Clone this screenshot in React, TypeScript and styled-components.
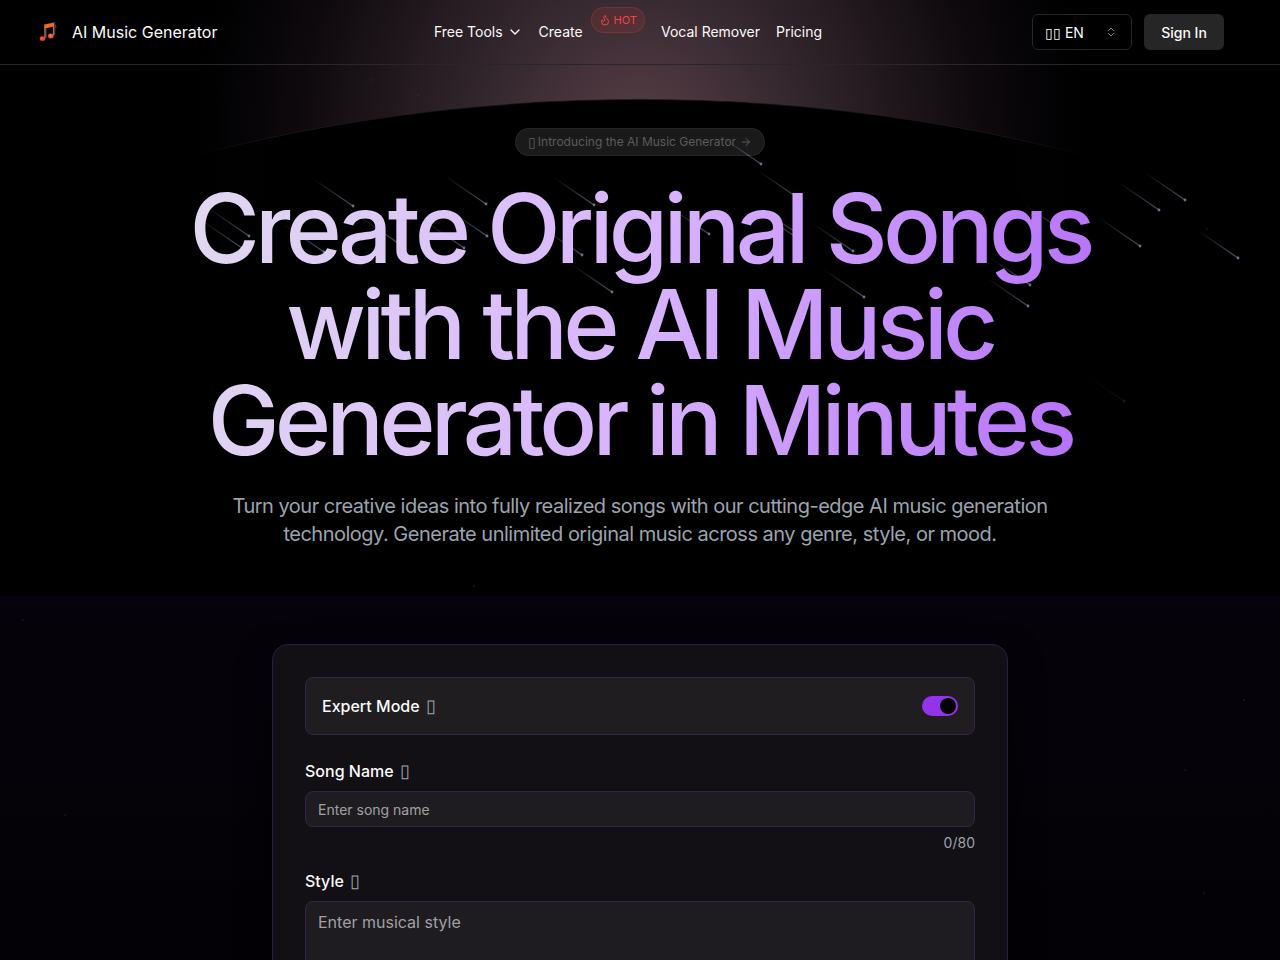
import React, { useState } from "react";
import styled, { createGlobalStyle } from "styled-components";
import { ArrowRight, ChevronDown, ChevronsUpDown, Flame } from "lucide-react";

const GlobalStyle = createGlobalStyle`
  *, *::before, *::after { box-sizing: border-box; }
  html { color-scheme: dark; background: #000; }
  body {
    margin: 0;
    background: #000;
    color: #fafafa;
    font-family: Inter, sans-serif;
    font-size: 16px;
    line-height: 24px;
    overflow-x: hidden;
  }
  button, input, textarea, select { font-family: inherit; }
  a { color: inherit; text-decoration: none; }
`;

const Page = styled.div`
  position: relative;
  min-height: 100vh;
  overflow: hidden;
`;

const Sky = styled.div`
  position: absolute;
  inset: 0 0 auto;
  height: 600px;
  overflow: hidden;
  pointer-events: none;
`;

const Glow = styled.div`
  position: absolute;
  inset: 0;
  background: radial-gradient(
    circle 450px at 50% 130px,
    #573d46 0%, #35282f 33%, #291e24 47%, #1c1419 60%, #0e090d 76%, #040305 90%, #000 100%
  );
`;

const Planet = styled.div`
  position: absolute;
  top: 99px;
  left: -50%;
  width: 200%;
  aspect-ratio: 10 / 7;
  border-radius: 50%;
  border-top: 1px solid #ffffff18;
  background: #000;
  mask-image: linear-gradient(90deg, transparent 32%, #000 36%, #000 64%, transparent 68%);
`;

const Meteors = styled.svg`
  position: absolute;
  top: 0;
  left: 50%;
  width: 1280px;
  height: 960px;
  margin-left: -640px;
  pointer-events: none;
`;

const Header = styled.header`
  position: relative;
  z-index: 2;
  display: grid;
  grid-template-columns: 1fr auto 1fr;
  align-items: center;
  height: 65px;
  padding: 0 56px 0 32px;
  border-bottom: 1px solid #27272a;
`;

const Brand = styled.a`
  display: flex;
  align-items: center;
  gap: 8px;
`;

const Nav = styled.nav`
  display: flex;
  align-items: center;
  gap: 16px;
  font-size: 14px;
  line-height: 20px;
`;

const MenuButton = styled.button`
  display: flex;
  align-items: center;
  gap: 4px;
  padding: 0;
  border: 0;
  background: none;
  color: inherit;
  font-size: 14px;
  line-height: 20px;
`;

const NavLink = styled.a`
  display: flex;
  align-items: center;
  gap: 8px;
`;

const HotBadge = styled.span`
  display: flex;
  align-items: center;
  gap: 3px;
  height: 26px;
  margin-bottom: 24px;
  padding: 0 7px;
  border: 1px solid #ef444433;
  border-radius: 13px;
  background: #ef44441f;
  color: #ef4444;
  font-size: 11px;
  line-height: 16px;
`;

const Actions = styled.div`
  display: flex;
  justify-content: flex-end;
  gap: 12px;
`;

const LanguageBox = styled.div`
  position: relative;
  display: flex;
  align-items: center;
  width: 100px;
  svg { position: absolute; right: 15px; color: #808080; pointer-events: none; }
`;

const LanguageSelect = styled.select`
  appearance: none;
  width: 100%;
  height: 36px;
  padding: 0 12px;
  border: 1px solid #27272a;
  border-radius: 6px;
  background: #000;
  color: #fafafa;
  font-size: 14px;
`;

const SignIn = styled.button`
  min-width: 80px;
  height: 36px;
  padding: 0 16px;
  border: 0;
  border-radius: 6px;
  background: #262626;
  color: #fafafa;
  font-size: 14px;
  font-weight: 500;
`;

const Hero = styled.section`
  position: relative;
  display: flex;
  flex-direction: column;
  align-items: center;
  padding: 63px 32px 48px;
  text-align: center;
`;

const Announcement = styled.a`
  display: flex;
  align-items: center;
  gap: 2px;
  height: 28px;
  padding: 0 12px;
  border: 1px solid #ffffff0e;
  border-radius: 14px;
  background: #ffffff1a;
  color: #5c5c5c;
  font-size: 12px;
  line-height: 16px;
  svg { margin-left: 2px; }
`;

const AnnouncementMark = styled.span`
  font-size: 14px;
`;

const Title = styled.h1`
  max-width: 1088px;
  margin: 24px 0 0;
  padding: 0 0 8px;
  background: linear-gradient(100deg, #e5e7eb -8%, #d8b4fe 50%, #a855f7 108%);
  background-clip: text;
  color: transparent;
  font-size: 96px;
  font-weight: 500;
  line-height: 96px;
  letter-spacing: -0.05em;
`;

const Lead = styled.p`
  max-width: 896px;
  margin: 16px 0 0;
  color: #9ca3af;
  font-size: 20px;
  line-height: 28px;
  letter-spacing: -0.025em;
`;

const Studio = styled.section`
  position: relative;
  display: flex;
  justify-content: center;
  padding: 48px 32px;
  background: linear-gradient(#7828c80e, #7828c806 400px, #7828c800);
`;

const Card = styled.form`
  width: 100%;
  max-width: 736px;
  padding: 32px;
  border: 1px solid #2e1a42;
  border-radius: 16px;
  background: #131015;
  box-shadow: 0 12px 32px #00000080;
`;

const ModeRow = styled.div`
  display: flex;
  align-items: center;
  justify-content: space-between;
  height: 58px;
  margin-bottom: 24px;
  padding: 0 16px;
  border: 1px solid #36234a;
  border-radius: 8px;
  background: #201d21;
`;

const Label = styled.label`
  display: flex;
  gap: 6px;
  font-weight: 500;
`;

const Hint = styled.span`
  color: #9ca3af;
  font-size: 18px;
  font-weight: 400;
`;

const Toggle = styled.input`
  appearance: none;
  width: 36px;
  height: 20px;
  margin: 0;
  padding: 2px;
  border-radius: 10px;
  background: #3f3f46;
  &::before {
    content: "";
    display: block;
    width: 16px;
    height: 16px;
    border-radius: 50%;
    background: #000;
  }
  &:checked { background: #9333ea; }
  &:checked::before { margin-left: 16px; }
`;

const Field = styled.div`
  display: flex;
  flex-direction: column;
  margin-bottom: 16px;
`;

const TextInput = styled.input`
  width: 100%;
  height: 36px;
  margin-top: 8px;
  padding: 0 12px;
  border: 1px solid #36234a;
  border-radius: 8px;
  outline: none;
  background: #1f1c21;
  color: #fafafa;
  font-size: 14px;
  &::placeholder { color: #a1a1a1; }
`;

const TextArea = styled.textarea`
  display: block;
  width: 100%;
  height: 68px;
  margin-top: 8px;
  padding: 8px 12px;
  border: 1px solid #36234a;
  border-radius: 8px;
  outline: none;
  background: #1f1c21;
  color: #fafafa;
  font-size: 16px;
  line-height: 24px;
  &::placeholder { color: #a1a1a1; }
`;

const Counter = styled.div`
  margin-top: 6px;
  color: #9ca3af;
  font-size: 14px;
  line-height: 20px;
  text-align: right;
`;

const meteors: [number, number, number][] = [
  [353, 206, 1], [249, 236, 1], [242, 248, 1], [487, 236, 1], [486, 204, 1],
  [594, 205, 1], [464, 248, 1], [582, 255, 1], [612, 292, 1], [324, 252, 1],
  [398, 243, 1], [761, 164, 1], [798, 198, 1], [709, 234, 1], [798, 234, 1],
  [800, 240, 1], [853, 251, 1], [864, 297, 1], [1028, 306, 1], [1030, 285, 1],
  [1066, 233, 1], [1159, 210, 1], [1185, 200, 1], [1140, 246, 1], [1238, 258, 1],
  [1124, 401, 0.2],
];

const specks: [number, number][] = [
  [371, 80], [418, 95], [617, 91], [1207, 229], [474, 586], [23, 620], [65, 815], [1185, 770], [1244, 700], [1204, 893],
];

const MusicLogo = () => (
  <svg width="32" height="32" viewBox="0 0 32 32" aria-hidden="true">
    <path d="M13.5 21.5V9.500l8.500-2v11.500" fill="none" stroke="#1c2c4a" strokeWidth="3" />
    <path d="M13 22V9.500M21.700 8v11.500" fill="none" stroke="#e0602f" strokeWidth="1.200" />
    <path d="M12.500 8.500l9.500-1.800v3.800l-9.500 2z" fill="#f26a26" />
    <path d="M22 8q2 1 2 4" fill="none" stroke="#6f3b35" />
    <ellipse cx="10.500" cy="22.500" rx="2.800" ry="2.300" fill="#d94d32" />
    <ellipse cx="18.800" cy="20" rx="2.800" ry="2.500" fill="#e35636" />
    <circle cx="18.500" cy="19.500" r="1" fill="#ff8877" />
    <circle cx="10" cy="22" r="0.800" fill="#ff755b" />
  </svg>
);

export default function App() {
  const [expert, setExpert] = useState(true);
  const [name, setName] = useState("");
  return (
    <Page>
      <GlobalStyle />
      <Sky><Glow /><Planet /></Sky>
      <Meteors viewBox="0 0 1280 960" aria-hidden="true">
        <defs>
          <linearGradient id="tail" x1="0" y1="0" x2="1" y2="1">
            <stop offset="0" stopColor="#64748b" stopOpacity="0" />
            <stop offset="1" stopColor="#64748b" stopOpacity="0.7" />
          </linearGradient>
        </defs>
        {meteors.map(([x, y, o]) => (
          <g key={`${x}-${y}`} opacity={o}>
            <path d={`M${x - 41} ${y - 28}L${x} ${y}`} stroke="url(#tail)" strokeWidth="1.300" />
            <circle cx={x} cy={y} r="1.400" fill="#64748b" />
          </g>
        ))}
        {specks.map(([x, y]) => (
          <circle key={`${x}-${y}`} cx={x} cy={y} r="1" fill="#7a3b66" opacity="0.25" />
        ))}
      </Meteors>
      <Header>
        <Brand href="#"><MusicLogo />AI Music Generator</Brand>
        <Nav>
          <MenuButton type="button">Free Tools<ChevronDown size={16} /></MenuButton>
          <NavLink href="#create">Create<HotBadge><Flame size={12} />HOT</HotBadge></NavLink>
          <NavLink href="#vocal">Vocal Remover</NavLink>
          <NavLink href="#pricing">Pricing</NavLink>
        </Nav>
        <Actions>
          <LanguageBox>
            <LanguageSelect aria-label="Language"><option>▯▯ EN</option></LanguageSelect>
            <ChevronsUpDown size={12} />
          </LanguageBox>
          <SignIn type="button">Sign In</SignIn>
        </Actions>
      </Header>
      <Hero>
        <Announcement href="#create">
          <AnnouncementMark>▯</AnnouncementMark>
          Introducing the AI Music Generator
          <ArrowRight size={12} />
        </Announcement>
        <Title>Create Original Songs with the AI Music Generator in Minutes</Title>
        <Lead>Turn your creative ideas into fully realized songs with our cutting-edge AI music generation technology. Generate unlimited original music across any genre, style, or mood.</Lead>
      </Hero>
      <Studio id="create">
        <Card onSubmit={(e) => e.preventDefault()}>
          <ModeRow>
            <Label htmlFor="expert">Expert Mode<Hint>▯</Hint></Label>
            <Toggle id="expert" type="checkbox" role="switch" checked={expert} onChange={() => setExpert(!expert)} />
          </ModeRow>
          <Field>
            <Label htmlFor="song">Song Name<Hint>▯</Hint></Label>
            <TextInput id="song" placeholder="Enter song name" maxLength={80} value={name} onChange={(e) => setName(e.target.value)} />
            <Counter>{name.length}/80</Counter>
          </Field>
          <Field>
            <Label htmlFor="style">Style<Hint>▯</Hint></Label>
            <TextArea id="style" placeholder="Enter musical style" />
          </Field>
        </Card>
      </Studio>
    </Page>
  );
}
